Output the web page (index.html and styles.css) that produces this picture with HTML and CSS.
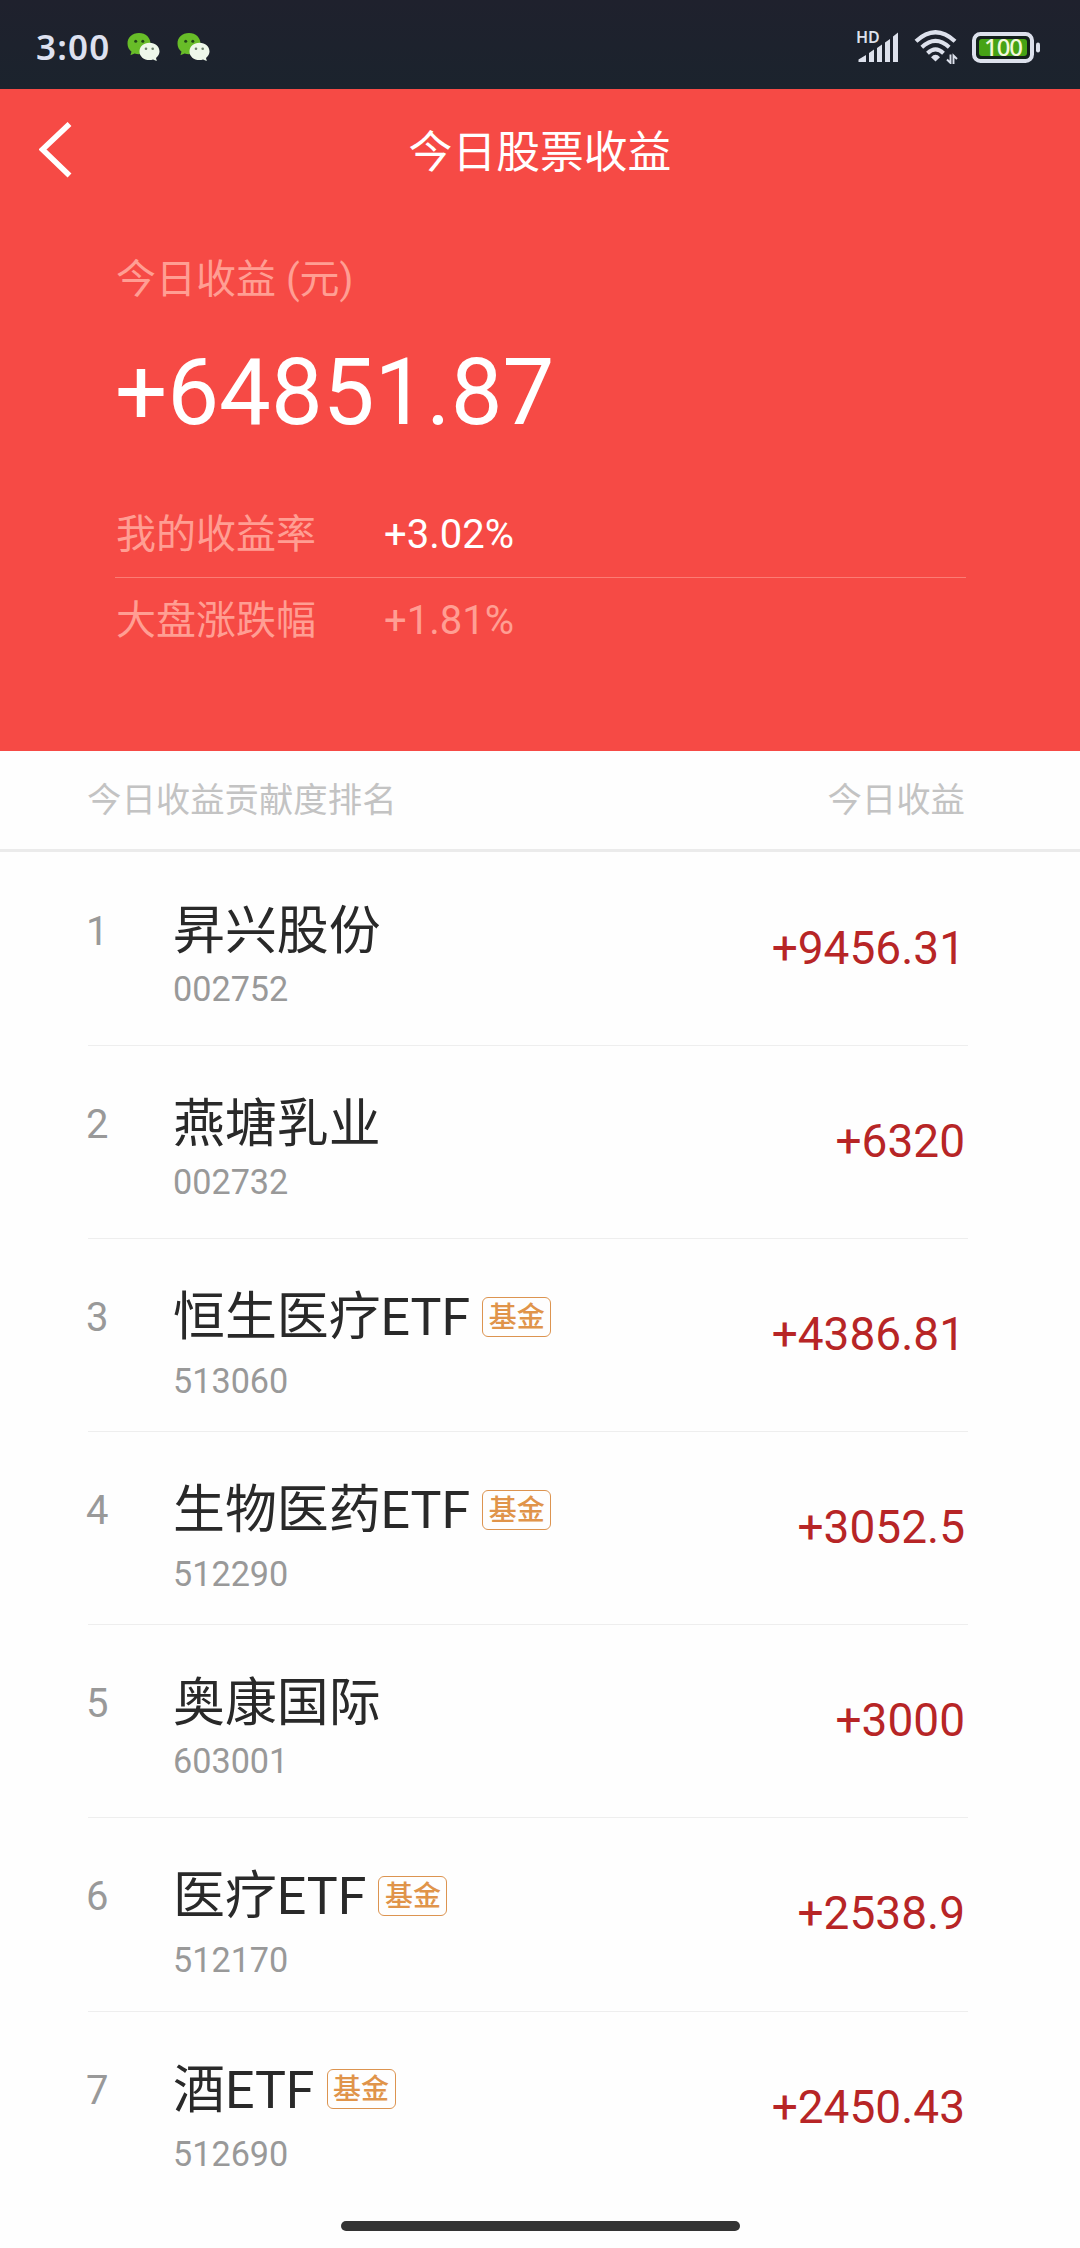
FILE: index.html
```html
<!DOCTYPE html>
<html lang="zh-CN">
<head>
<meta charset="utf-8">
<title>今日股票收益</title>
<link rel="stylesheet" href="styles.css">
</head>
<body>
<svg width="0" height="0" class="defs" aria-hidden="true">
  <symbol id="wechat" viewBox="0 0 33 28">
    <path d="M12 0C5.200 0 .5 4.600 .5 10.500c0 3.500 1.500 6.300 4 8.200L3.400 22.200 7.600 20.500c1.400.5 2.800.7 4.400.7 6.800 0 11.500-4.700 11.500-10.600S18.800 0 12 0z" fill="#68bd28"/>
    <circle cx="8.700" cy="8.300" r="1.500" fill="#234719"/><circle cx="15.800" cy="8.300" r="1.500" fill="#234719"/>
    <path d="M22.500 9.800c-5.800 0-10 3.800-10 8.700s4.200 8.600 10 8.600c1.300 0 2.400-.1 3.500-.5l3.800 1.400-.8-3.100c2.200-1.600 3.500-3.800 3.500-6.400 0-4.900-4.200-8.700-10-8.700z" fill="#eef8ea"/>
    <circle cx="19" cy="15.800" r="1.300" fill="#6c8069"/><circle cx="25.700" cy="15.800" r="1.300" fill="#6c8069"/>
  </symbol>
</svg>
<div class="screen">
  <header class="status">
    <span class="time">3:00</span>
    <svg class="chat"><use href="#wechat"/></svg>
    <svg class="chat"><use href="#wechat"/></svg>
    <svg class="signal" viewBox="0 0 42 32" fill="#dde1ec">
      <text x="-1" y="12" class="hd">HD</text>
      <path d="M1.500 31V28.500L9 24V31zM12 31V22l5-3.500V31zM20 31V17l5-3.500V31zM28 31V11.500L33 8V31zM36 31V5.500L41 1.500V31z"/>
    </svg>
    <svg class="wifi" viewBox="0 0 44 34" fill="none" stroke="#dde1ec">
      <path d="M2 11.200Q21.500-6.800 41 11.200" stroke-width="4.200"/>
      <path d="M7.800 17.200Q21.500 4.500 35.200 17.200" stroke-width="4"/>
      <path d="M13.500 23.200Q21.500 15.500 29.500 23.200" stroke-width="4"/>
      <path d="M17 27.200Q21.500 22.500 26 27.200L21.500 31.500z" fill="#dde1ec" stroke="none"/>
      <path d="M36.500 24.500V33L33 29.500M39.500 34V25.500L43 29" stroke-width="1.900"/>
    </svg>
    <svg class="battery" viewBox="0 0 69 31">
      <rect x="2" y="2" width="58" height="27" rx="6.500" fill="#14201c" stroke="#dde1ec" stroke-width="4"/>
      <rect x="7" y="7" width="48" height="17" rx="3" fill="#46a315"/>
      <rect x="64" y="10.500" width="4" height="10" rx="2" fill="#dde1ec"/>
      <text x="31" y="24" class="charge">100</text>
    </svg>
  </header>

  <section class="hero">
    <nav class="navbar">
      <svg class="back" viewBox="0 0 34 56"><path d="M30.500 2L3.500 27.500 30.500 53.500" fill="none" stroke="#fff" stroke-width="5.600" stroke-linejoin="miter"/></svg>
      <h1 class="title">今日股票收益</h1>
    </nav>
    <div class="summary">
      <div class="label">今日收益 (元)</div>
      <div class="total">+64851.87</div>
      <div class="rate"><span class="rate-name">我的收益率</span><span class="rate-value">+3.02%</span></div>
      <div class="rate muted"><span class="rate-name">大盘涨跌幅</span><span class="rate-value">+1.81%</span></div>
    </div>
  </section>

  <div class="list-head"><span>今日收益贡献度排名</span><span>今日收益</span></div>

  <main class="list">
    <div class="row"><span class="rank">1</span><div class="stock"><div class="name">昇兴股份</div><div class="code">002752</div></div><span class="amount">+9456.31</span></div>
    <div class="row"><span class="rank">2</span><div class="stock"><div class="name">燕塘乳业</div><div class="code">002732</div></div><span class="amount">+6320</span></div>
    <div class="row"><span class="rank">3</span><div class="stock fund"><div class="name">恒生医疗ETF<span class="tag">基金</span></div><div class="code">513060</div></div><span class="amount">+4386.81</span></div>
    <div class="row"><span class="rank">4</span><div class="stock fund"><div class="name">生物医药ETF<span class="tag">基金</span></div><div class="code">512290</div></div><span class="amount">+3052.5</span></div>
    <div class="row"><span class="rank">5</span><div class="stock"><div class="name">奥康国际</div><div class="code">603001</div></div><span class="amount">+3000</span></div>
    <div class="row"><span class="rank">6</span><div class="stock fund"><div class="name">医疗ETF<span class="tag">基金</span></div><div class="code">512170</div></div><span class="amount">+2538.9</span></div>
    <div class="row"><span class="rank">7</span><div class="stock fund"><div class="name">酒ETF<span class="tag">基金</span></div><div class="code">512690</div></div><span class="amount">+2450.43</span></div>
  </main>
  <div class="home-bar"></div>
</div>
</body>
</html>
```

FILE: styles.css
```css
* { box-sizing: border-box; }

body {
  margin: 0;
  background: #fefefe;
  font-family: Roboto, "Noto Sans CJK SC", sans-serif;
}

.defs { display: none; }

.screen {
  width: 1080px;
  height: 2248px;
  overflow: hidden;
  display: flex;
  flex-direction: column;
}

/* Status bar */
.status {
  flex: none;
  height: 89px;
  padding: 5px 39px 0 36px;
  display: flex;
  align-items: center;
  background: linear-gradient(#1f212d, #1b232d);
}

.time {
  width: 91px;
  font: 600 35px/40px "Noto Sans", sans-serif;
  letter-spacing: 1.2px;
  color: #dde1f0;
}

.chat { width: 33px; height: 28px; margin-right: 17px; }
.signal { width: 42px; height: 32px; margin-left: auto; overflow: visible; }
.hd { font: 600 16px "Noto Sans", sans-serif; }
.wifi { width: 44px; height: 34px; margin-left: 15px; }
.battery { width: 69px; height: 31px; margin-left: 14px; overflow: visible; }
.charge { font: 500 24px "Noto Sans", sans-serif; letter-spacing: -1px; fill: #f2f8dc; text-anchor: middle; }

/* Red summary panel */
.hero {
  flex: none;
  height: 662px;
  background: #f64a45;
  color: #fff;
}

.navbar {
  height: 127px;
  padding: 0 39px;
  display: grid;
  grid-template-columns: 34px 1fr 34px;
  align-items: center;
}

.back { width: 34px; height: 56px; margin-top: -6px; }
.title { margin: 0; font-size: 43.800px; font-weight: 400; line-height: 60px; text-align: center; }
.summary { padding: 34px 114px 0 115px; }
.label { font-size: 40px; line-height: 60px; color: #ff9e93; text-indent: 1px; }
.total { margin-top: 28px; font-size: 92.200px; line-height: 110px; }

.rate {
  display: flex;
  align-items: center;
  height: 86px;
  font-size: 40px;
  line-height: 60px;
}

.total + .rate { margin-top: 43px; height: 87px; padding-top: 1px; border-bottom: 1px solid #fb7c74; }
.rate-name { width: 269px; color: #ff9e93; text-indent: 1px; }
.muted { color: #ff9e93; }

/* Ranking */
.list-head {
  flex: none;
  height: 101px;
  padding: 0 115px 0 87px;
  display: flex;
  justify-content: space-between;
  font-size: 34.400px;
  line-height: 98px;
  color: #c3c3c3;
  border-bottom: 3px solid #ebebeb;
}

.list { flex: none; padding: 1px 112px 0 88px; }

.row {
  height: 193.100px;
  padding-top: 49px;
  padding-right: 3px;
  display: flex;
  align-items: flex-start;
  border-bottom: 1px solid #eeeeee;
}

.row:last-child { border-bottom: 0; }
.rank { width: 85px; margin-left: -2px; font-size: 40px; line-height: 59px; color: #999; }
.stock { flex: 1; margin-left: 2px; }
.name { display: flex; align-items: center; font-size: 51.900px; line-height: 60px; color: #292929; }
.code { margin-top: 7px; font-size: 34.200px; line-height: 40px; color: #999; }
.fund .code { margin-top: 13px; }

.tag {
  width: 69px;
  height: 40px;
  margin: -3px 0 0 12px;
  border: 1.500px solid #dc9450;
  border-radius: 6px;
  font-size: 28px;
  font-weight: 500;
  line-height: 39px;
  text-align: center;
  color: #e0944a;
}

.amount { margin-top: 16px; font-size: 46px; line-height: 60px; color: #b72526; }

.home-bar {
  flex: none;
  width: 399px;
  height: 10px;
  margin: 16px auto 0;
  border-radius: 5px;
  background: #333;
}
```
